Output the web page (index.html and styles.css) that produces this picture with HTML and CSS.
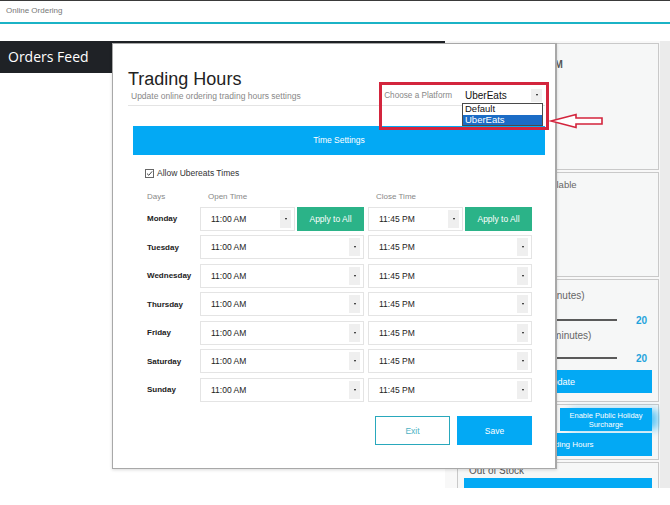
FILE: index.html
```html
<!doctype html>
<html lang="en">
<head>
<meta charset="utf-8">
<meta name="viewport" content="width=device-width, initial-scale=1">
<title>Online Ordering - Trading Hours</title>
<link rel="stylesheet" href="styles.css">
</head>
<body>

<header class="topbar">Online Ordering</header>

<div class="app">

	<section class="feed">
		<h2 class="feed-title">Orders Feed</h2>
	</section>

	<aside class="side">

		<div class="card card-status">
			<p class="card-head">Closing at 11:45 PM</p>
		</div>

		<div class="card card-online">
			<p class="card-text">Online Ordering Available</p>
		</div>

		<div class="card card-times">
			<p class="card-text">Preparation Time (minutes)</p>
			<div class="slider"><span class="track"></span><b class="slider-val">20</b></div>
			<p class="card-text lbl-two">Delivery Wait Time (minutes)</p>
			<div class="slider slider-two"><span class="track"></span><b class="slider-val">20</b></div>
			<button class="side-btn btn-update">Update</button>
		</div>

		<div class="card card-actions">
			<div class="action-grid">
				<button class="side-btn btn-small">Disable Ordering</button>
				<button class="side-btn btn-small btn-glow">Enable Public Holiday Surcharge</button>
			</div>
			<button class="side-btn btn-hours">Edit Trading Hours</button>
		</div>

		<div class="card card-stock">
			<p class="stock-title">Out of Stock</p>
			<button class="side-btn btn-stock" aria-label="Select items"></button>
		</div>

	</aside>

	<div class="gutter"></div>

</div>

<div class="modal">

	<div class="modal-head">
		<div>
			<h1 class="modal-title">Trading Hours</h1>
			<p class="modal-sub">Update online ordering trading hours settings</p>
		</div>

		<div class="platform">
			<span class="platform-lbl">Choose a Platform</span>
			<div class="platform-select">
				<span>UberEats</span>
				<i class="caret-box"><i class="caret"></i></i>
				<ul class="platform-list">
					<li>Default</li>
					<li class="picked">UberEats</li>
				</ul>
			</div>
		</div>
	</div>

	<div class="section-bar">Time Settings</div>

	<div class="hours">

		<label class="allow"><span class="check"><svg width="9" height="9" viewBox="0 0 9 9"><rect x="0.5" y="0.5" width="8" height="8" fill="#fff" stroke="#666"/><path d="M2 4.6 L3.8 6.3 L7.1 2.4" fill="none" stroke="#444" stroke-width="1"/></svg></span>Allow Ubereats Times</label>

		<div class="hours-grid">
			<span class="col-head">Days</span>
			<span class="col-head col-time">Open Time</span>
			<span class="col-head col-time">Close Time</span>

			<span class="day">Monday</span>
			<div class="time-group">
				<div class="time-select">11:00 AM<i class="caret-box"><i class="caret"></i></i></div>
				<button class="apply">Apply to All</button>
			</div>
			<div class="time-group">
				<div class="time-select">11:45 PM<i class="caret-box"><i class="caret"></i></i></div>
				<button class="apply">Apply to All</button>
			</div>

			<span class="day">Tuesday</span>
			<div class="time-select">11:00 AM<i class="caret-box"><i class="caret"></i></i></div>
			<div class="time-select">11:45 PM<i class="caret-box"><i class="caret"></i></i></div>

			<span class="day">Wednesday</span>
			<div class="time-select">11:00 AM<i class="caret-box"><i class="caret"></i></i></div>
			<div class="time-select">11:45 PM<i class="caret-box"><i class="caret"></i></i></div>

			<span class="day">Thursday</span>
			<div class="time-select">11:00 AM<i class="caret-box"><i class="caret"></i></i></div>
			<div class="time-select">11:45 PM<i class="caret-box"><i class="caret"></i></i></div>

			<span class="day">Friday</span>
			<div class="time-select">11:00 AM<i class="caret-box"><i class="caret"></i></i></div>
			<div class="time-select">11:45 PM<i class="caret-box"><i class="caret"></i></i></div>

			<span class="day">Saturday</span>
			<div class="time-select">11:00 AM<i class="caret-box"><i class="caret"></i></i></div>
			<div class="time-select">11:45 PM<i class="caret-box"><i class="caret"></i></i></div>

			<span class="day">Sunday</span>
			<div class="time-select">11:00 AM<i class="caret-box"><i class="caret"></i></i></div>
			<div class="time-select">11:45 PM<i class="caret-box"><i class="caret"></i></i></div>
		</div>

		<div class="modal-foot">
			<button class="btn-exit">Exit</button>
			<button class="btn-save">Save</button>
		</div>

	</div>

</div>

<!-- annotation drawn over the screenshot -->
<div class="mark-box"></div>
<svg class="mark-arrow" width="56" height="16" viewBox="0 0 56 16">
	<path d="M2 8 L27 1.5 L27 5 L53 5 L53 11 L27 11 L27 14.5 Z" fill="#fff" stroke="#d3253d" stroke-width="1.6" stroke-linejoin="miter"/>
</svg>

</body>
</html>
```

FILE: styles.css
```css
* { box-sizing: border-box; }

html, body { margin: 0; }

body { background: #fff; color: #222; font-family: "Liberation Sans", Arial, sans-serif;
	height: 505px; overflow: hidden; position: relative; width: 670px; }

p, h1, h2, ul { margin: 0; padding: 0; }

button { border: none; cursor: pointer; font-family: inherit; padding: 0; }

/* page behind the dialog */

.topbar { border-bottom: 2px solid #1bb3c6; border-top: 1px solid #3a3a3a; color: #777;
	font-size: 8px; height: 24px; line-height: 20px; padding-left: 6px; }

.app { display: flex; height: 464px; margin-top: 17px; overflow: hidden; }

.feed { flex: none; width: 445px; }

.feed-title { background: #1f2226; color: #fff; font: 500 14px "Open Sans", sans-serif;
	height: 32px; line-height: 31px; padding-left: 8px; }

.side { background: #f8f8f8; flex: none; padding: 2px 1px 0 12px; width: 215px; }

.gutter { background: #ebebeb; flex: 1; }

.card { background: #f6f7f7; border: 1px solid #c9c9c9; margin-bottom: 2px; padding: 0 6px 0 11px; }

.card-status { height: 127px; padding-top: 15px; }
.card-online { height: 105px; padding-top: 6px; }
.card-times { height: 123px; padding-top: 10px; padding-left: 6px; }
.card-actions { height: 56px; padding-top: 3px; }
.card-stock { height: 40px; padding: 2px 6px 0 6px; }

.card-head { color: #555; font-size: 10px; font-weight: bold; line-height: 12px; white-space: nowrap; }

.card-text { color: #666; font-size: 9.5px; line-height: 12px; white-space: nowrap; }
.card-times .card-text { font-size: 10px; }
.lbl-two { margin-top: 4px; }

.slider { align-items: center; display: flex; height: 12px; margin-top: 12px; padding-left: 5px; }
.slider-two { margin-top: 10px; }
.track { background: #5a5a5a; flex: 1; height: 2px; }
.slider-val { color: #1fa3dc; font-size: 10px; padding-right: 5px; text-align: right; width: 35px; }

.side-btn { background: #03a9f4; color: #fff; display: block; font-size: 8px; width: 100%; }

.btn-update { font-size: 9px; height: 23px; margin: 6px 0 0 5px; width: calc(100% - 5px); }

.action-grid { display: grid; gap: 4px; grid-template-columns: 1fr 92px; }

.btn-small { font-size: 7.5px; height: 23px; line-height: 9px; padding: 0 4px; }

.btn-glow { box-shadow: 8px 0 8px -2px rgba(3, 169, 244, 0.65); }

.btn-hours { height: 23px; margin-top: 2px; }

.stock-title { color: #555; font-size: 10px; line-height: 12px; padding-left: 5px; }

.btn-stock { height: 24px; margin-top: 1px; }

/* dialog */

.modal { background: #fff; border: 1px solid #a8a8a8; border-right-width: 2px;
	box-shadow: 0 1px 3px rgba(0, 0, 0, 0.15); height: 426px; left: 112px; position: absolute;
	top: 43px; width: 445px; }

.modal-head { border-bottom: 1px solid #e4e4e4; display: flex; justify-content: space-between;
	margin: 0 10px 0 15px; padding: 25px 2px 3px 0; }

.modal-title { color: #222; font-size: 18px; font-weight: normal; line-height: 20px; }

.modal-sub { color: #888; font-size: 8.5px; line-height: 12px; margin-top: 1px; padding-left: 3px; }

.platform { align-items: center; display: flex; gap: 10px; height: 14px; margin-top: 19px; }

.platform-lbl { color: #888; font-size: 8.2px; }

.platform-select { align-items: center; color: #111; display: flex; font-size: 10px; height: 14px;
	justify-content: space-between; padding: 0 1px 0 3px; position: relative; width: 81px; }

.platform-select .caret-box { height: 13px; position: static; width: 11px; }

.platform-list { background: #fff; border: 1px solid #4a4a4a; font-size: 9.5px; left: 0;
	list-style: none; position: absolute; top: 15px; width: 81px; z-index: 2; }

.platform-list li { height: 10.5px; line-height: 10.5px; padding-left: 2px; }

.platform-list .picked { background: #1b6cc6; color: #fff; }

.section-bar { background: #03a9f4; color: #fff; font-size: 8.5px; height: 29px; line-height: 29px;
	margin: 20px 10px 0 20px; text-align: center; }

.hours { padding-left: 32px; }

.allow { align-items: center; color: #333; display: flex; font-size: 8.5px; gap: 3px; height: 12px;
	margin-top: 12px; }

.check { display: flex; }

.hours-grid { align-items: center; display: grid; gap: 4.5px 4px; grid-template-columns: 49px 164px 164px;
	grid-auto-rows: 24px; margin: 11px 0 0 2px; grid-template-rows: 12px; }

.col-head { color: #888; font-size: 8px; margin-bottom: -0.5px; }
.col-time { padding-left: 8px; }

.day { color: #222; font-size: 8px; font-weight: bold; }

.time-group { display: flex; gap: 2px; height: 24px; }

.time-select { align-items: center; border: 1px solid #e4e4e4; color: #222; display: flex; flex: 1;
	font-size: 8.5px; height: 24px; padding-left: 10px; position: relative; }

.caret-box { align-items: center; background: #efefef; bottom: 2px; display: flex; justify-content: center;
	position: absolute; right: 3px; top: 2px; width: 11px; }

.caret { border-left: 1.5px solid transparent; border-right: 1.5px solid transparent;
	border-top: 2px solid #111; height: 0; width: 0; }

.apply { background: #2bb388; color: #fff; font-size: 8.5px; height: 24px; width: 67px; }

.modal-foot { display: flex; gap: 7px; justify-content: flex-end; margin-top: 14.5px; padding-right: 23px; }

.btn-exit, .btn-save { font-size: 8.5px; height: 29px; width: 75px; }

.btn-exit { background: #fff; border: 1px solid #29a8bc; color: #4cb2c3; }

.btn-save { background: #03a9f4; color: #fff; }

/* red annotation */

.mark-box { border: 3px solid #d3253d; height: 48px; left: 379px; position: absolute; top: 82px; width: 170px; }

.mark-arrow { left: 549px; position: absolute; top: 113px; }

/* white strip under the cropped screen */
.app::after { content: none; }
body::after { background: #fff; content: ""; height: 17px; left: 0; position: absolute; top: 488px; width: 670px; z-index: 5; }
```
